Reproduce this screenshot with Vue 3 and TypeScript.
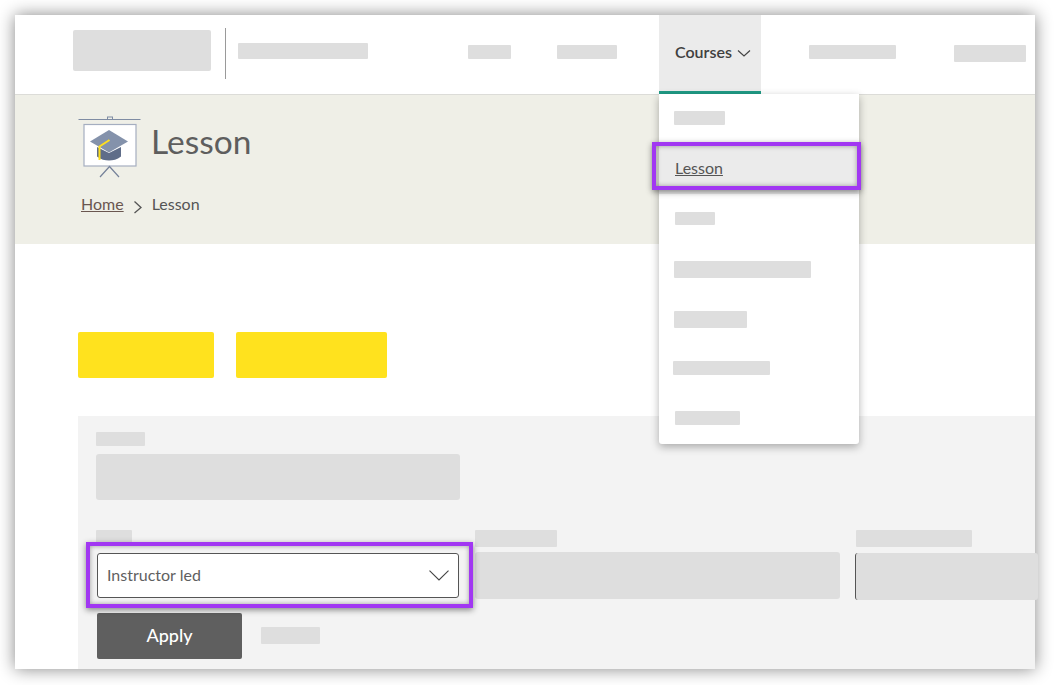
<script setup lang="ts">
const menuWidths: Array<{ w: number; h: number; x: number; y: number } | null> = [
  { w: 51, h: 14, x: 15, y: 0 },
  null,
  { w: 40, h: 13, x: 16, y: 0 },
  { w: 137, h: 17, x: 15, y: 2 },
  { w: 73, h: 17, x: 15, y: 2 },
  { w: 97, h: 14, x: 14, y: 0 },
  { w: 65, h: 14, x: 16, y: 0 },
]
</script>

<template>
  <div class="page">
    <div class="frame">
      <header class="top">
        <div class="logo ph"></div>
        <div class="divider"></div>
        <div class="site ph"></div>
        <nav class="nav">
          <div class="nav-ph ph n1"></div>
          <div class="nav-ph ph n2"></div>
          <div class="tab">
            <span>Courses</span>
            <svg class="tab-chev" width="14" height="8" viewBox="0 0 14 8"><path d="M1 1.500 7 7l6-5.500" fill="none" stroke="#444" stroke-width="1.200" /></svg>
          </div>
          <div class="nav-ph ph n3"></div>
          <div class="nav-ph ph n4"></div>
        </nav>
      </header>

      <section class="hero">
        <div class="hero-head">
          <svg class="lesson-icon" width="64" height="64" viewBox="78 115 64 64">
            <rect x="107.500" y="117" width="5" height="2.500" fill="none" stroke="#7f8ca3" />
            <path d="M78.500 119.500h62" stroke="#7f8ca3" stroke-width="1.200" fill="none" />
            <rect x="84" y="124.500" width="52" height="41.500" fill="#fff" stroke="#a5aec0" stroke-width="1.200" />
            <path d="M100 177l9.500-10.500L119 177" fill="none" stroke="#76829a" stroke-width="1.200" />
            <path d="M97 147v9.500c4 3 8 4 12 4s8-1 12-4V147l-12 6z" fill="#5f6d89" />
            <path d="M90 141.500 109 130l19 11.500-19 11z" fill="#8492ab" />
            <path d="M109.500 140 99.500 146.500V160" fill="none" stroke="#ffdf1e" stroke-width="2" />
          </svg>
          <h1>Lesson</h1>
        </div>
        <div class="crumbs">
          <a>Home</a>
          <svg width="10" height="14" viewBox="0 0 10 14"><path d="M1.500 1.500 8 7.500 1.500 13" fill="none" stroke="#555" stroke-width="1.300" /></svg>
          <span>Lesson</span>
        </div>
      </section>

      <main class="body">
        <div class="actions">
          <div class="yellow y1"></div>
          <div class="yellow y2"></div>
        </div>

        <section class="panel">
          <div class="ph l0"></div>
          <div class="ph i0"></div>
          <div class="fields">
            <div class="field f1">
              <div class="ph l1"></div>
              <div class="select">
                <span>Instructor led</span>
                <svg width="20" height="11" viewBox="0 0 20 11"><path d="M.500.700 10 10 19.500.700" fill="none" stroke="#444" stroke-width="1.100" /></svg>
              </div>
            </div>
            <div class="field f2">
              <div class="ph l2"></div>
              <div class="ph i2"></div>
            </div>
            <div class="field f3">
              <div class="ph l3"></div>
              <div class="ph i3"></div>
            </div>
          </div>
          <div class="submit">
            <div class="apply">Apply</div>
            <div class="ph reset"></div>
          </div>
        </section>
      </main>

      <div class="menu">
        <div v-for="(m, i) in menuWidths" :key="i" class="menu-item" :class="{ active: !m }">
          <div v-if="m" class="ph" :style="{ width: m.w + 'px', height: m.h + 'px', marginLeft: m.x + 'px', marginTop: m.y + 'px' }"></div>
          <a v-else>Lesson</a>
        </div>
      </div>

      <div class="mark mark-menu"></div>
      <div class="mark mark-select"></div>
    </div>
  </div>
</template>

<style>
html, body { margin: 0; background: #fff; }
</style>

<style scoped>
.page {
  box-sizing: border-box;
  height: 685px;
  padding: 15px 0 0 15px;
  overflow: hidden;
}
.frame {
  position: relative;
  width: 1020px;
  height: 654px;
  background: #fff;
  box-shadow: 0 0 16px rgba(0, 0, 0, 0.48);
  font-family: Lato, "Open Sans", sans-serif;
  color: #5c5c5c;
}
.ph { background: #dedede; border-radius: 1px; }

.top {
  display: flex;
  align-items: flex-start;
  height: 79px;
  padding-left: 58px;
  border-bottom: 1px solid #dcdcd8;
  box-sizing: content-box;
}
.logo { width: 138px; height: 41px; margin-top: 15px; border-radius: 2px; }
.divider { width: 1px; height: 51px; margin: 13px 12px 0 14px; background: #9a9a9a; }
.site { width: 130px; height: 16px; margin-top: 28px; }
.nav { display: flex; align-items: flex-start; margin-left: 100px; }
.nav-ph { margin-top: 30px; }
.n1 { width: 43px; height: 14px; margin-right: 46px; }
.n2 { width: 60px; height: 14px; margin-right: 42px; }
.n3 { width: 87px; height: 14px; margin-left: 48px; margin-right: 58px; }
.n4 { width: 72px; height: 17px; }
.tab {
  display: flex;
  align-items: center;
  gap: 5px;
  box-sizing: border-box;
  width: 102px;
  height: 79px;
  padding: 0 0 4px 16px;
  background: #ebebeb;
  border-bottom: 3px solid #1f9b85;
  color: #404040;
  font-size: 16px;
  font-weight: 600;
}
.tab-chev { margin-top: 3px; }

.hero { height: 149px; background: #efefe7; padding-left: 63px; box-sizing: border-box; padding-top: 20px; }
.hero-head { display: flex; align-items: flex-start; }
.lesson-icon { display: block; flex: none; }
h1 {
  margin: 4px 0 0 9px;
  font-size: 33.500px;
  line-height: 44px;
  font-weight: 400;
  color: #5e5e5e;
}
.crumbs {
  display: flex;
  align-items: center;
  margin: 15px 0 0 3px;
  font-size: 16px;
  line-height: 20px;
  color: #555;
}
.crumbs a { color: #6a5650; text-decoration: underline; }
.crumbs svg { margin: 6px 9px 0 9px; }

.body { padding: 88px 0 0 63px; }
.actions { display: flex; gap: 22px; }
.yellow { height: 46px; background: #ffe21e; border-radius: 2px; }
.y1 { width: 136px; }
.y2 { width: 151px; }

.panel {
  box-sizing: border-box;
  height: 253px;
  margin-top: 38px;
  padding: 16px 0 0 18px;
  background: #f3f3f3;
}
.l0 { width: 49px; height: 14px; }
.i0 { width: 364px; height: 46px; margin-top: 8px; border-radius: 3px; }
.fields { display: flex; margin-top: 30px; }
.field { flex: none; }
.f1 { width: 379px; }
.l1 { width: 36px; height: 14px; }
.select {
  display: flex;
  align-items: center;
  justify-content: space-between;
  box-sizing: border-box;
  width: 362px;
  height: 45px;
  margin: 9px 0 0 1px;
  padding: 0 9px 2px 9px;
  background: #fff;
  border: 1px solid #555;
  border-radius: 3px;
  font-size: 16px;
  color: #5f5f5f;
}
.select svg { margin-top: 2px; }
.f2 { width: 381px; }
.l2 { width: 82px; height: 17px; }
.i2 { width: 365px; height: 47px; margin-top: 5px; border-radius: 3px; }
.l3 { width: 116px; height: 17px; }
.i3 {
  width: 183px;
  height: 47px;
  margin: 6px 0 0 -1px;
  border-left: 1px solid #555;
  border-radius: 3px;
  box-sizing: border-box;
}
.submit { display: flex; align-items: flex-start; margin: 13px 0 0 1px; }
.apply {
  display: flex;
  align-items: center;
  justify-content: center;
  width: 145px;
  height: 46px;
  padding-bottom: 3px;
  box-sizing: border-box;
  background: #5f5f5f;
  border-radius: 2px;
  color: #fff;
  font-size: 18px;
  font-weight: 500;
}
.reset { width: 59px; height: 17px; margin: 14px 0 0 19px; }

.menu {
  position: absolute;
  left: 644px;
  top: 79px;
  width: 200px;
  background: #fff;
  border-radius: 0 0 3px 3px;
  box-shadow: 0 3px 9px rgba(0, 0, 0, 0.3);
}
.menu-item { display: flex; align-items: center; height: 50px; padding-bottom: 2px; box-sizing: border-box; }
.menu-item.active { background: #ebebeb; height: 50px; padding-bottom: 4px; }
.menu-item a {
  margin-left: 16px;
  font-size: 16px;
  color: #555;
  text-decoration: underline;
}
.mark {
  position: absolute;
  box-sizing: border-box;
  border: 4px solid #a137f2;
  box-shadow: 0 2px 6px rgba(0, 0, 0, 0.45), inset 0 0 5px rgba(0, 0, 0, 0.35);
}
.mark-menu { left: 637px; top: 127px; width: 209px; height: 48px; }
.mark-select { left: 71px; top: 527px; width: 387px; height: 66px; }
</style>
